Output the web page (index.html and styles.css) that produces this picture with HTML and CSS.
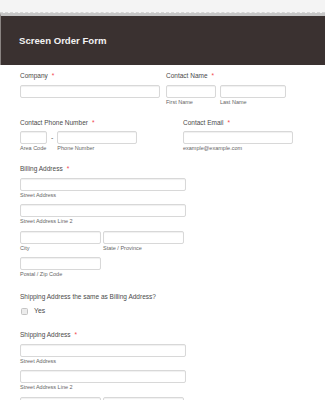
FILE: index.html
```html
<!DOCTYPE html>
<html lang="en">
<head>
  <meta charset="UTF-8" />
  <meta name="viewport" content="width=device-width, initial-scale=1.0"/>
  <title>Screen Order Form</title>
  <link rel="stylesheet" href="styles.css">
</head>
<body>
  <div class="topbar"></div>
  <header>
    <h1>Screen Order Form</h1>
  </header>

  <form class="form">
    <div class="row">
      <div class="field w-company">
        <label class="label">Company<span class="req">*</span></label>
        <input class="input w140" type="text" />
      </div>
      <div class="field">
        <label class="label">Contact Name<span class="req">*</span></label>
        <div class="group">
          <div class="sub"><input class="input w50" type="text" /><span class="hint">First Name</span></div>
          <div class="sub"><input class="input w66" type="text" /><span class="hint">Last Name</span></div>
        </div>
      </div>
    </div>

    <div class="row">
      <div class="field w-phone">
        <label class="label">Contact Phone Number<span class="req">*</span></label>
        <div class="group">
          <div class="sub"><input class="input w27" type="text" /><span class="hint">Area Code</span></div>
          <span class="dash">-</span>
          <div class="sub"><input class="input w80" type="text" /><span class="hint">Phone Number</span></div>
        </div>
      </div>
      <div class="field">
        <label class="label">Contact Email<span class="req">*</span></label>
        <div class="sub"><input class="input w110" type="text" /><span class="hint">example@example.com</span></div>
      </div>
    </div>

    <div class="field address">
      <label class="label">Billing Address<span class="req">*</span></label>
      <div class="sub line"><input class="input w166" type="text" /><span class="hint">Street Address</span></div>
      <div class="sub line"><input class="input w166" type="text" /><span class="hint">Street Address Line 2</span></div>
      <div class="group line gap2">
        <div class="sub"><input class="input w81" type="text" /><span class="hint">City</span></div>
        <div class="sub"><input class="input w81" type="text" /><span class="hint">State / Province</span></div>
      </div>
      <div class="sub line"><input class="input w81" type="text" /><span class="hint">Postal / Zip Code</span></div>
    </div>

    <div class="field question">
      <label class="label">Shipping Address the same as Billing Address?</label>
      <label class="check"><span class="box"></span>Yes</label>
    </div>

    <div class="field address">
      <label class="label">Shipping Address<span class="req">*</span></label>
      <div class="sub line"><input class="input w166" type="text" /><span class="hint">Street Address</span></div>
      <div class="sub line"><input class="input w166" type="text" /><span class="hint">Street Address Line 2</span></div>
      <div class="group line gap2">
        <input class="input w81" type="text" />
        <input class="input w81" type="text" />
      </div>
    </div>
  </form>
</body>
</html>
```

FILE: styles.css
```css
body {
  margin: 0;
  font-family: "Liberation Sans", Arial, sans-serif;
  background-color: white;
  color: #4a4a4a;
}

.topbar {
  height: 12px;
  background-color: #f4f4f4;
  border-bottom: 1px dashed #d4d4d4;
}

header {
  border-top: 3px solid #c6c6c6;
  border-left: 1px solid #8a8482;
  background-color: #3a3130;
  height: 49px;
  display: flex;
  align-items: center;
  padding-left: 18px;
}

h1 {
  margin: 0;
  font-size: 9.6px;
  font-weight: bold;
  color: #f2f2f2;
}

.form {
  padding: 7px 0 0 20px;
}

.row {
  display: flex;
}

.w-company {
  width: 146px;
}

.w-phone {
  width: 163px;
}

.field {
  display: flex;
  flex-direction: column;
  align-items: flex-start;
  margin-bottom: 13px;
}

.label {
  font-size: 6.5px;
  line-height: 8px;
  margin-bottom: 4.5px;
  color: #4a4a4a;
}

.req {
  color: #f2434b;
  margin-left: 4px;
}

.group {
  display: flex;
  gap: 4px;
}

.gap2 {
  gap: 2px;
}

.sub {
  display: flex;
  flex-direction: column;
}

.line {
  margin-bottom: 5.5px;
}

.address {
  margin-bottom: 10px;
}

.address .line:last-child {
  margin-bottom: 5px;
}

.input {
  box-sizing: border-box;
  height: 13px;
  margin: 0;
  padding: 0;
  border: 1px solid #d8d8d8;
  border-radius: 2px;
  background-color: #fff;
  box-shadow: inset 0 1px 1px #f0f0f0;
}

.w27 { width: 27px; }
.w50 { width: 50px; }
.w66 { width: 66px; }
.w80 { width: 80px; }
.w81 { width: 81px; }
.w110 { width: 110px; }
.w140 { width: 140px; }
.w166 { width: 166px; }

.hint {
  font-size: 5.5px;
  line-height: 7px;
  margin-top: 1px;
  color: #666;
}

.dash {
  font-size: 7px;
  line-height: 13px;
  color: #555;
}

.question {
  margin-bottom: 16px;
}

.question .label {
  margin-bottom: 6px;
}

.check {
  display: flex;
  align-items: center;
  font-size: 6.8px;
  line-height: 8px;
  color: #4a4a4a;
  padding-left: 1px;
}

.box {
  width: 7px;
  height: 7px;
  box-sizing: border-box;
  border: 1px solid #c4c4c4;
  border-radius: 1.5px;
  background-color: #ececec;
  margin-right: 6px;
}
```
